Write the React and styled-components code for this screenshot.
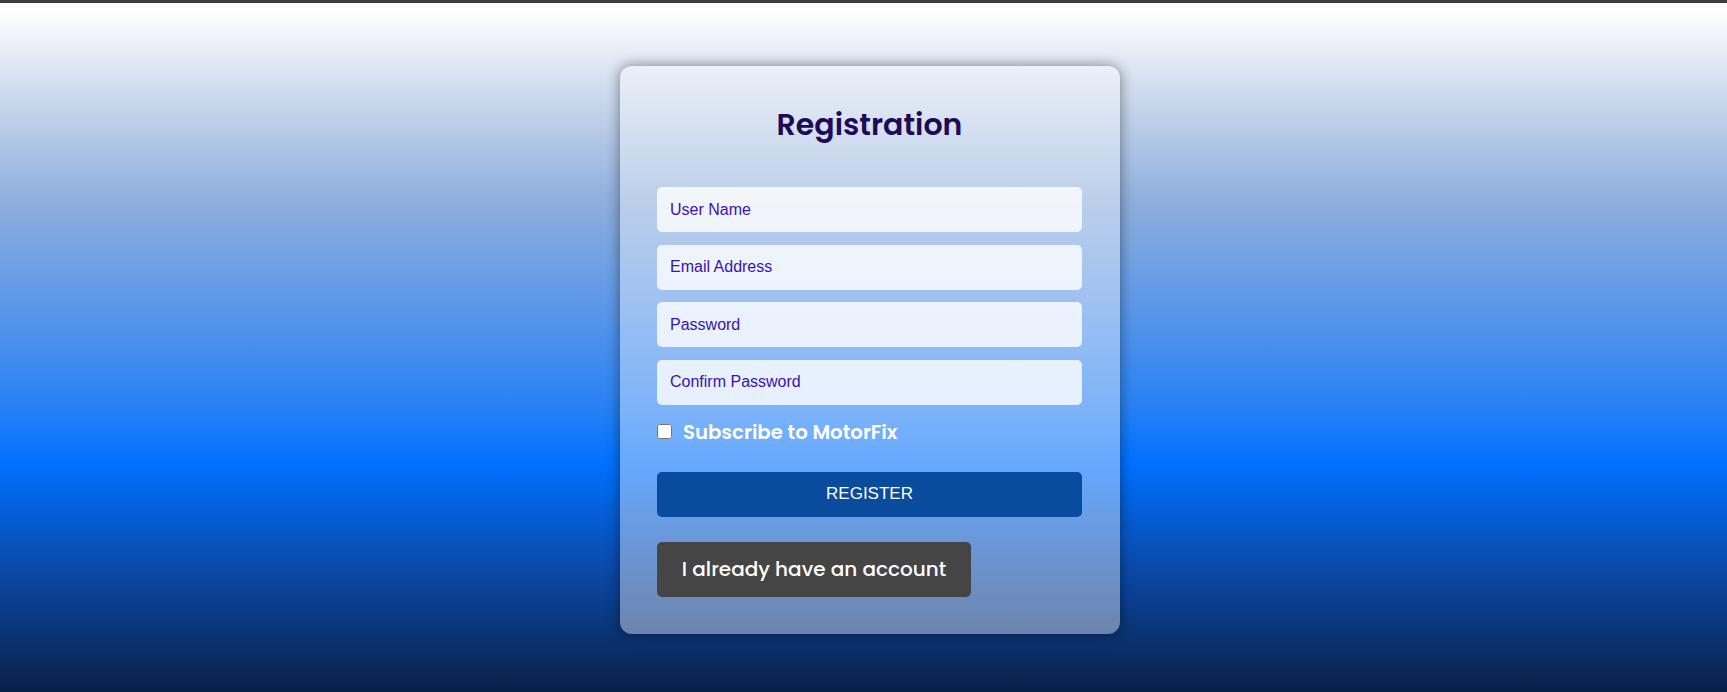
import React from 'react';
import styled, { createGlobalStyle } from 'styled-components';

const GlobalStyle = createGlobalStyle`
  * { box-sizing: border-box; }
  html, body { margin: 0; padding: 0; }
  body {
    border-top: 3px solid #3d3d3d;
    font-family: "Liberation Sans", Arial, sans-serif;
  }
`;

const Page = styled.div`
  min-height: calc(100vh - 3px);
  display: flex;
  align-items: center;
  justify-content: center;
  padding: 5px 0 0 13px;
  background: linear-gradient(
    to bottom,
    #ffffff 1%,
    #c8d6ec 14.5%,
    #8eaedc 29%,
    #5e98e8 43.5%,
    #2a82f4 58%,
    #0070ff 67%,
    #0a4cb0 81%,
    #0a2550 98%,
    #06204a 100%
  );
`;

const Card = styled.form`
  width: 500px;
  padding: 31px 38px 37px 37px;
  border-radius: 12px;
  background: rgba(255, 255, 255, 0.4);
  box-shadow: 0 0 14px rgba(0, 0, 0, 0.45);
  display: flex;
  flex-direction: column;
`;

const Title = styled.h2`
  margin: 0 0 34px;
  text-align: center;
  font-family: Poppins, Inter, "Open Sans", sans-serif;
  font-weight: 600;
  font-size: 30px;
  line-height: 56px;
  color: #200a58;
`;

const Fields = styled.div`
  display: flex;
  flex-direction: column;
  gap: 12.5px;
`;

const Input = styled.input`
  height: 45px;
  width: 100%;
  border: none;
  outline: none;
  border-radius: 5px;
  padding: 0 13px;
  background: rgba(255, 255, 255, 0.8);
  font-family: "Liberation Sans", Arial, sans-serif;
  font-size: 16px;
  color: #3a12b4;
  &::placeholder { color: #3a12b4; opacity: 1; }
`;

const CheckRow = styled.label`
  display: flex;
  align-items: center;
  gap: 11px;
  margin: 13px 0 0;
  height: 28px;
  font-family: Poppins, Inter, "Open Sans", sans-serif;
  font-weight: 600;
  font-size: 19.7px;
  color: #ffffff;
  input {
    margin: 0;
    width: 15px;
    height: 15px;
  }
`;

const Register = styled.button`
  margin-top: 26px;
  height: 45px;
  width: 100%;
  border: none;
  border-radius: 5px;
  background: #094b9c;
  color: #ffffff;
  font-family: "Liberation Sans", Arial, sans-serif;
  font-size: 17px;
`;

const Login = styled.button`
  margin-top: 25px;
  align-self: flex-start;
  height: 55px;
  width: 314px;
  border: none;
  border-radius: 5px;
  background: #454545;
  color: #ffffff;
  font-family: Poppins, Inter, "Open Sans", sans-serif;
  font-weight: 500;
  font-size: 20px;
`;

export default function App() {
  return (
    <>
      <GlobalStyle />
      <Page>
        <Card onSubmit={(e) => e.preventDefault()}>
          <Title>Registration</Title>
          <Fields>
            <Input type="text" placeholder="User Name" />
            <Input type="email" placeholder="Email Address" />
            <Input type="password" placeholder="Password" />
            <Input type="password" placeholder="Confirm Password" />
          </Fields>
          <CheckRow>
            <input type="checkbox" />
            Subscribe to MotorFix
          </CheckRow>
          <Register type="submit">REGISTER</Register>
          <Login type="button">I already have an account</Login>
        </Card>
      </Page>
    </>
  );
}
